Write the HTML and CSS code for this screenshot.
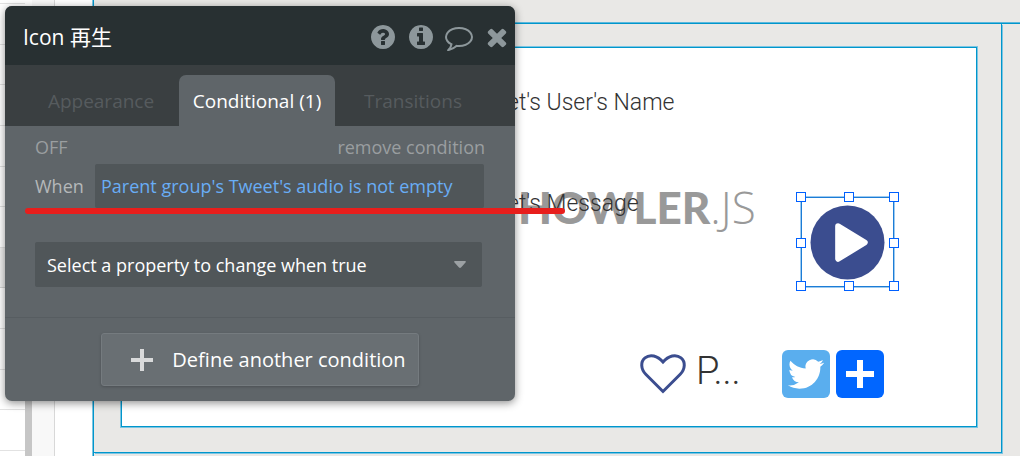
FILE: index.html
```html
<!DOCTYPE html>
<html lang="en">
<head>
<meta charset="utf-8">
<title>Editor</title>
<link rel="stylesheet" href="styles.css">
</head>
<body>
<div class="editor">
  <aside class="palette">
    <div class="row row-first"></div>
    <div class="row"></div><div class="row"></div><div class="row"></div>
    <div class="row"></div><div class="row"></div><div class="row"></div>
    <div class="row row-heading"></div>
    <div class="row"></div><div class="row"></div><div class="row"></div>
    <div class="row"></div>
  </aside>
  <div class="scrollbar"></div>
  <div class="ruler"></div>
  <main class="canvas">
    <div class="strip"></div>
    <div class="group">
      <div class="card">
        <div class="logo"><span class="logo-bold">HOWLER</span><span class="logo-thin">.JS</span></div>
        <p class="field field-name">et's User's Name</p>
        <p class="field field-message">et's Message</p>

        <div class="selection">
          <svg class="play" viewBox="0 0 76 76" aria-label="再生">
            <circle cx="38" cy="38" r="37.5" fill="#3b4d8f"/>
            <path d="M28.500 21.500L55.500 38L28.500 54.500Z" fill="#fff" stroke="#fff" stroke-width="6" stroke-linejoin="round"/>
          </svg>
          <i class="handle top left"></i><i class="handle top center"></i><i class="handle top right"></i>
          <i class="handle middle left"></i><i class="handle middle right"></i>
          <i class="handle bottom left"></i><i class="handle bottom center"></i><i class="handle bottom right"></i>
        </div>

        <div class="actions">
          <svg class="heart" viewBox="0 0 46 42" fill="none" stroke="#3b4d8f" stroke-width="3">
            <path d="M23 38.500L6 21.500C0.500 16 0.500 8.500 5 4.900C10 0.800 17.500 2.500 23 9C28.500 2.500 36 0.800 41 4.900C45.500 8.500 45.500 16 40 21.500Z"/>
          </svg>
          <span class="count">P...</span>
          <a class="share twitter" href="#" aria-label="Twitter">
            <svg viewBox="0 0 24 24" width="36" height="36" fill="#fff"><path d="M23.953 4.57a10 10 0 01-2.825.775 4.958 4.958 0 002.163-2.723c-.951.555-2.005.959-3.127 1.184a4.92 4.92 0 00-8.384 4.482C7.69 8.095 4.067 6.13 1.64 3.162a4.822 4.822 0 00-.666 2.475c0 1.71.87 3.213 2.188 4.096a4.904 4.904 0 01-2.228-.616v.06a4.923 4.923 0 003.946 4.827 4.996 4.996 0 01-2.212.085 4.936 4.936 0 004.604 3.417 9.867 9.867 0 01-6.102 2.105c-.39 0-.779-.023-1.17-.067a13.995 13.995 0 007.557 2.209c9.053 0 13.998-7.496 13.998-13.985 0-.21 0-.42-.015-.63A9.935 9.935 0 0024 4.59z"/></svg>
          </a>
          <a class="share more" href="#" aria-label="Share">
            <svg viewBox="0 0 28 28" width="28" height="28" fill="#fff"><path d="M11 0h6v11h11v6H17v11h-6V17H0v-6h11z"/></svg>
          </a>
        </div>
      </div>
    </div>
  </main>
</div>

<section class="panel" aria-label="Property editor">
  <header class="panel-header">
    <h1 class="panel-title">Icon 再生</h1>
    <button class="tool" type="button" aria-label="Help"><svg viewBox="0 0 1792 1792"><path d="M1024 1376v-192q0-14-9-23t-23-9h-192q-14 0-23 9t-9 23v192q0 14 9 23t23 9h192q14 0 23-9t9-23zm256-672q0-88-55.500-163t-138.500-116-170-41q-243 0-371 213-15 24 8 42l132 100q7 6 19 6 16 0 25-12 53-68 86-92 34-24 86-24 48 0 85.500 26t37.500 59q0 38-20 61t-68 45q-63 28-115.500 86.500t-52.500 125.500v36q0 14 9 23t23 9h192q14 0 23-9t9-23q0-19 21.500-49.500t54.500-49.500q32-18 49-28.500t46-35 44.500-48 28-60.500 12.500-81zm384 192q0 209-103 385.500t-279.500 279.500-385.500 103-385.500-103-279.500-279.500-103-385.500 103-385.500 279.500-279.500 385.500-103 385.500 103 279.500 279.500 103 385.500z"/></svg></button>
    <button class="tool" type="button" aria-label="Info"><svg viewBox="0 0 1792 1792"><path d="M1152 1376v-160q0-14-9-23t-23-9h-96v-512q0-14-9-23t-23-9h-320q-14 0-23 9t-9 23v160q0 14 9 23t23 9h96v320h-96q-14 0-23 9t-9 23v160q0 14 9 23t23 9h448q14 0 23-9t9-23zm-128-896v-160q0-14-9-23t-23-9h-192q-14 0-23 9t-9 23v160q0 14 9 23t23 9h192q14 0 23-9t9-23zm640 416q0 209-103 385.500t-279.500 279.500-385.500 103-385.500-103-279.500-279.500-103-385.500 103-385.500 279.500-279.500 385.500-103 385.500 103 279.500 279.500 103 385.500z"/></svg></button>
    <button class="tool" type="button" aria-label="Comment"><svg viewBox="0 0 1792 1792"><path d="M896 384q-204 0-381.500 69.500t-282 187.500-104.500 255q0 112 71.500 213.500t201.500 175.500l87 50-27 96q-24 91-70 172 152-63 275-171l43-38 57 6q69 8 130 8 204 0 381.500-69.500t282-187.500 104.500-255-104.500-255-282-187.500-381.500-69.500zm896 512q0 174-120 321.500t-326 233-450 85.500q-70 0-145-8-198 175-460 242-49 14-114 22h-5q-15 0-27-10.500t-16-27.500v-1q-3-4-.5-12t2-10 4.500-9.500l6-9 7-8.500 8-9q7-8 31-34.500t34.500-38 31-39.500 32.500-51 27-59 26-76q-157-89-247.500-220t-90.500-281q0-174 120-321.500t326-233 450-85.500 450 85.500 326 233 120 321.500z"/></svg></button>
    <button class="tool" type="button" aria-label="Close"><svg viewBox="0 0 1792 1792"><path d="M1490 1322q0 40-28 68l-136 136q-28 28-68 28t-68-28l-294-294-294 294q-28 28-68 28t-68-28l-136-136q-28-28-28-68t28-68l294-294-294-294q-28-28-28-68t28-68l136-136q28-28 68-28t68 28l294 294 294-294q28-28 68-28t68 28l136 136q28 28 28 68t-28 68l-294 294 294 294q28 28 28 68z"/></svg></button>
  </header>
  <nav class="tabs" role="tablist">
    <button class="tab" type="button" role="tab">Appearance</button>
    <button class="tab active" type="button" role="tab" aria-selected="true">Conditional (1)</button>
    <button class="tab" type="button" role="tab">Transitions</button>
  </nav>
  <div class="condition">
    <div class="status">
      <button class="link" type="button">OFF</button>
      <button class="link" type="button">remove condition</button>
    </div>
    <div class="when">
      <span class="when-label" id="when">When</span>
      <button class="expression" type="button" aria-describedby="when">Parent group's Tweet's audio is not empty</button>
    </div>
    <div class="property">
      <select class="property-select" aria-label="Property">
        <option>Select a property to change when true</option>
      </select>
      <svg class="caret" viewBox="0 0 12 7" width="12" height="7"><path d="M1 0h10q1.500 0.500 0.500 1.500L7 6.500q-1 0.800-2 0L0.500 1.500q-1-1 0.500-1.500z" fill="#9ca1a4"/></svg>
    </div>
  </div>
  <footer class="panel-footer">
    <button class="define" type="button">
      <svg viewBox="0 0 22 22" width="22" height="22" fill="#d9dadb"><path d="M9 0h4v9h9v4h-9v9H9v-9H0V9h9z"/></svg>
      <span>Define another condition</span>
    </button>
  </footer>
</section>
<div class="marker"></div>
</body>
</html>
```
FILE: styles.css
```css
* { box-sizing: border-box; }

body {
  margin: 0;
  overflow: hidden;
  background: #fff;
  font-family: "Open Sans", "Noto Sans CJK JP", sans-serif;
}

button, select {
  margin: 0;
  padding: 0;
  border: 0;
  background: none;
  font: inherit;
  color: inherit;
}

/* Editor behind the panel */
.editor {
  display: flex;
  height: 100vh;
  min-height: 456px;
  overflow: hidden;
}

.palette {
  display: flex;
  flex-direction: column;
  width: 25px;
  padding-bottom: 5px;
}
.row { flex: 1; border-bottom: 1px solid #e2e2e2; }
.row-first { flex: none; height: 4px; }
.row-heading { background: #efefef; border-color: #d4d4d4; }
.scrollbar { width: 7px; margin-top: 24px; background: #c6c6c6; }
.ruler {
  width: 23px;
  background: #f8f8f8;
  border-right: 1px solid #d8d8d8;
}

.canvas {
  display: flex;
  flex-direction: column;
  flex: 1;
  margin-left: 38px;
  border-left: 1px solid #0096cc;
  box-shadow: -1px 0 #7cc5e2;
  background: #e9e8e6;
}
.strip {
  height: 24px;
  border-bottom: 1px solid #0096cc;
  box-shadow: inset 0 -1px #5cb8dc;
}
.group {
  flex: 1;
  margin: 0 18px 3px 0;
  padding: 23px 24px 25px 27px;
  border-right: 1px solid #0096cc;
  border-bottom: 1px solid #0096cc;
  box-shadow: 1px 1px #7cc5e2;
}
.card {
  position: relative;
  height: 100%;
  border: 1px solid #0096cc;
  box-shadow: 0 0 0 1px #7cc5e2;
  background: #fff;
}

/* Elements placed freely on the design canvas */
.field {
  position: absolute;
  left: 385px;
  margin: 0;
  font: 300 23px/28px Roboto, sans-serif;
  color: #333;
  white-space: nowrap;
}
.field-name { top: 41px; }
.field-message { top: 142px; }

.logo {
  position: absolute;
  left: 396px;
  top: 131px;
  display: flex;
  align-items: baseline;
  font: 900 44px/56px Lato, sans-serif;
  color: #999;
}
.logo-thin { font-family: "Open Sans", sans-serif; font-weight: 300; }

.selection {
  position: absolute;
  left: 679px;
  top: 149px;
  width: 93px;
  height: 90px;
  border: 1px solid #1c7cd6;
  box-shadow: 0 0 0 1px #9ccaf0;
}
.play {
  display: block;
  width: 75px;
  height: 75px;
  margin: 7px 8px;
}
.handle {
  position: absolute;
  width: 10px;
  height: 10px;
  border: 1px solid #0060ff;
  background: #fff;
}
.top { top: -6px; }
.middle { top: 40px; }
.bottom { bottom: -5px; }
.left { left: -6px; }
.center { left: 42px; }
.right { right: -6px; }

.actions {
  position: absolute;
  left: 518px;
  top: 302px;
  display: flex;
  align-items: center;
}
.heart { width: 46px; height: 42px; }
.count {
  width: 86px;
  margin-left: 10px;
  padding-bottom: 6px;
  font: 300 38px/40px Roboto, sans-serif;
  color: #333;
}
.share {
  display: flex;
  align-items: center;
  justify-content: center;
  width: 48px;
  height: 48px;
  border-radius: 6px;
}
.twitter { background: #5aaeee; }
.more { margin-left: 6px; background: #0166ff; }

/* Floating property panel */
.panel {
  position: absolute;
  left: 5px;
  top: 6px;
  width: 510px;
  border-radius: 7px;
  overflow: hidden;
  background: #5f6569;
  box-shadow: 0 2px 8px rgba(0, 0, 0, 0.45);
}
.panel-header {
  display: flex;
  align-items: center;
  gap: 10px;
  height: 59px;
  padding: 2px 4px 0 18px;
  background: #283032;
  color: #fff;
}
.panel-title {
  flex: 1;
  margin: 0;
  font-size: 21px;
  font-weight: 400;
  line-height: 28px;
}
.tool { width: 28px; height: 28px; fill: #8d979b; }
.tool svg { display: block; width: 28px; height: 28px; }

.tabs {
  display: flex;
  height: 61px;
  padding: 10px 24px 0 18px;
  background: #3a3f41;
}
.tab {
  flex: 1;
  border-radius: 7px 7px 0 0;
  font-size: 19px;
  color: #565b5e;
}
.tab.active {
  background: #5f6569;
  color: #fff;
  font-weight: 500;
}

.condition {
  padding: 8px 30px 30px;
  border-bottom: 1px solid #575d61;
  font-size: 18px;
}
.status {
  display: flex;
  justify-content: space-between;
  height: 30px;
  line-height: 26px;
  color: #9a9ea0;
}
.link { display: flex; }
.when {
  display: flex;
  align-items: center;
  height: 44px;
}
.when-label { width: 60px; color: #b5b8ba; }
.expression {
  flex: 1;
  height: 44px;
  margin-right: 1px;
  padding-left: 6px;
  border-radius: 2px;
  background: #505659;
  color: #69adf5;
  text-align: left;
}
.property {
  display: flex;
  align-items: center;
  margin: 34px 3px 0 0;
  padding-right: 16px;
  border-radius: 2px;
  background: #505659;
}
.property-select {
  flex: 1;
  height: 45px;
  padding-left: 12px;
  appearance: none;
  color: #fff;
}

.panel-footer {
  display: flex;
  justify-content: center;
  padding: 15px 0;
}
.define {
  display: flex;
  align-items: center;
  gap: 19px;
  height: 53px;
  padding: 0 12px 0 29px;
  border: 1px solid #757b7f;
  border-radius: 3px;
  background: #696f73;
  box-shadow: 0 1px 3px rgba(0, 0, 0, 0.2);
  color: #fff;
  font-size: 20px;
}

/* Red underline drawn over the condition */
.marker {
  position: absolute;
  left: 25px;
  top: 208px;
  width: 540px;
  height: 6px;
  border-radius: 3px;
  background: #e81e1c;
}
```
